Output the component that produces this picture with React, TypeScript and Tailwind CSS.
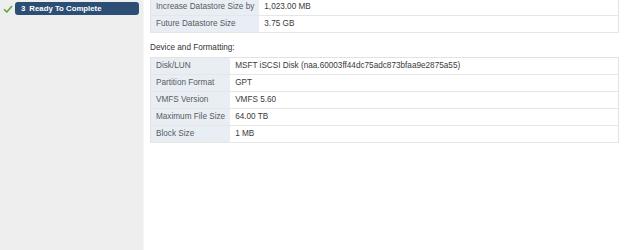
import React from 'react'

const font = { fontFamily: '"Liberation Sans", Arial, sans-serif' }

interface Row {
  label: string
  value: string
}

const sizeRows: Row[] = [
  { label: 'Increase Datastore Size by', value: '1,023.00 MB' },
  { label: 'Future Datastore Size', value: '3.75 GB' }
]

const deviceRows: Row[] = [
  { label: 'Disk/LUN', value: 'MSFT iSCSI Disk (naa.60003ff44dc75adc873bfaa9e2875a55)' },
  { label: 'Partition Format', value: 'GPT' },
  { label: 'VMFS Version', value: 'VMFS 5.60' },
  { label: 'Maximum File Size', value: '64.00 TB' },
  { label: 'Block Size', value: '1 MB' }
]

const InfoTable: React.FC<{ rows: Row[]; className?: string }> = ({ rows, className }) => (
  <table className={`w-full border-collapse border border-[#e2e2e2] ${className ?? ''}`}>
    <tbody>
      {rows.map((row) => (
        <tr key={row.label} className="h-[17px] border-b border-[#e6e6e6]">
          <td className="w-[1%] whitespace-nowrap bg-[#e9eef4] px-[5px] text-[#555b61]">{row.label}</td>
          <td className="whitespace-nowrap px-[5px] text-[#3a3a3a]">{row.value}</td>
        </tr>
      ))}
    </tbody>
  </table>
)

export default function App() {
  return (
    <div className="flex h-[250px] w-[628px] overflow-hidden bg-white text-[8.2px] leading-none" style={font}>
      {/* Wizard steps */}
      <div className="w-[144px] shrink-0 border-r border-[#f6f6f6] bg-[#eeeeee] pt-[2px]">
        <div className="flex items-center">
          <svg className="ml-[3px] h-[8px] w-[10px]" viewBox="0 0 10 8" fill="none">
            <path d="M1 4.2 L3.8 7 L9 1" stroke="#5fa83a" strokeWidth="1.6" />
          </svg>
          <div className="ml-[2px] flex h-[13px] w-[124px] items-center rounded-[3px] bg-[#2c4e74] px-[6px] text-[7.8px] font-bold text-white">
            <span>3</span>
            <span className="ml-[4px]">Ready To Complete</span>
          </div>
        </div>
      </div>

      {/* Summary */}
      <div className="flex-1 pl-[6px] pr-[9px]">
        <InfoTable rows={sizeRows} className="-mt-[2px]" />
        <div className="mt-[11px] mb-[5px] text-[#333]">Device and Formatting:</div>
        <InfoTable rows={deviceRows} />
      </div>
    </div>
  )
}
